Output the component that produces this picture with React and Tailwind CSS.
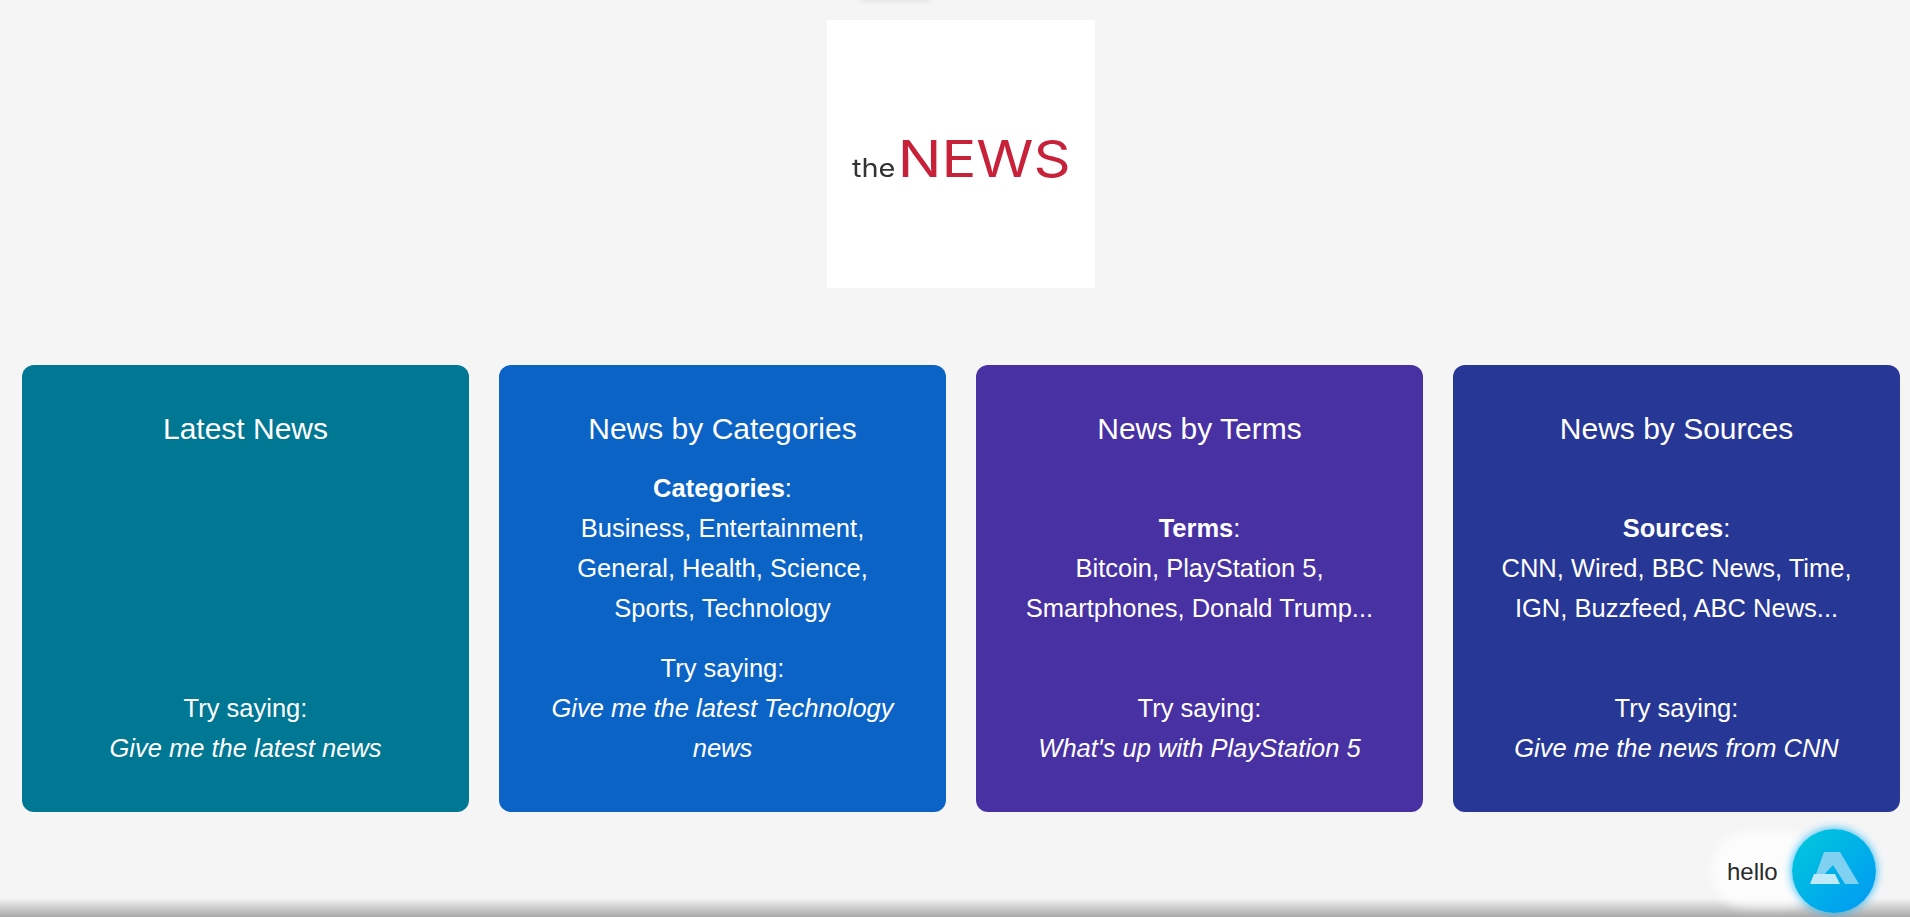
const cards = [
  { title: "Latest News", bg: "bg-[#007793]", details: null, tryText: "Give me the latest news" },
  { title: "News by Categories", bg: "bg-[#0c63c6]", label: "Categories", details: ["Business, Entertainment,", "General, Health, Science,", "Sports, Technology"], tryText: "Give me the latest Technology news" },
  { title: "News by Terms", bg: "bg-[#4831a3]", label: "Terms", details: ["Bitcoin, PlayStation 5,", "Smartphones, Donald Trump..."], tryText: "What's up with PlayStation 5" },
  { title: "News by Sources", bg: "bg-[#273796]", label: "Sources", details: ["CNN, Wired, BBC News, Time,", "IGN, Buzzfeed, ABC News..."], tryText: "Give me the news from CNN" },
];

function Card({ title, bg, label, details, tryText }) {
  return (
    <div className={`${bg} w-[447px] h-[447px] rounded-[12px] pt-[44px] pb-[44px] px-[43px] flex flex-col text-white text-center`}>
      <h2 className="text-[30px] leading-[40px] font-normal">{title}</h2>
      <div className="mt-[19px] h-[160px] flex flex-col justify-end text-[25.5px] leading-[40px]">
        {details && (
          <>
            <div><strong className="font-bold">{label}</strong>:</div>
            {details.map((d) => <div key={d}>{d}</div>)}
          </>
        )}
      </div>
      <div className="mt-5 h-[120px] flex flex-col justify-end text-[25.5px] leading-[40px]">
        <div>Try saying:</div>
        <em className="italic">{tryText}</em>
      </div>
    </div>
  );
}

function AlanIcon() {
  return (
    <svg width="84" height="84" viewBox="0 0 84 84" fill="none" className="blur-[0.6px]">
      <path d="M32 23H48L67 55H53L41 36L30 48H23Z" fill="#7fd0f1" />
      <path d="M22 45H43L48 55H18Z" fill="#bfeafa" />
    </svg>
  );
}

export default function App() {
  return (
    <div className="relative h-[917px] overflow-hidden bg-[#f5f5f6] font-['Liberation_Sans',Arial,sans-serif]">
      <div className="absolute left-[860px] -top-[5px] w-[70px] h-[7px] rounded-full bg-[#e4e4e4] blur-[2px]" />
      <div className="flex flex-col items-center pt-5 pl-[22px] pr-[10px]">
        <div className="w-[268px] h-[268px] bg-white flex items-center justify-center pt-[9px]">
          <div className="flex items-baseline font-['Inter',sans-serif] font-normal scale-x-[1.16]">
            <span className="text-[#333333] text-[25px] leading-none mr-[2px]">the</span>
            <span className="text-[#c8213a] text-[50px] leading-none">NEWS</span>
          </div>
        </div>
        <div className="mt-[77px] flex gap-[30px]">
          {cards.map((c) => <Card key={c.title} {...c} />)}
        </div>
      </div>
      <div className="absolute bottom-0 left-0 right-0 h-[19px] bg-gradient-to-b from-[#f5f5f6] to-[#a9a9a9]" />
      <div className="absolute left-[1712px] top-[832px] w-[110px] h-[76px] rounded-[36px] bg-white/70 blur-[5px]" />
      <div className="absolute left-[1727px] top-[852px] text-[24px] leading-[40px] text-[#2a2a2a]">hello</div>
      <div className="absolute left-[1792px] top-[829px] w-[84px] h-[84px] rounded-full bg-gradient-to-br from-[#00c9da] to-[#0a97f3] shadow-[0_0_10px_#19b5f5]">
        <AlanIcon />
      </div>
    </div>
  );
}
